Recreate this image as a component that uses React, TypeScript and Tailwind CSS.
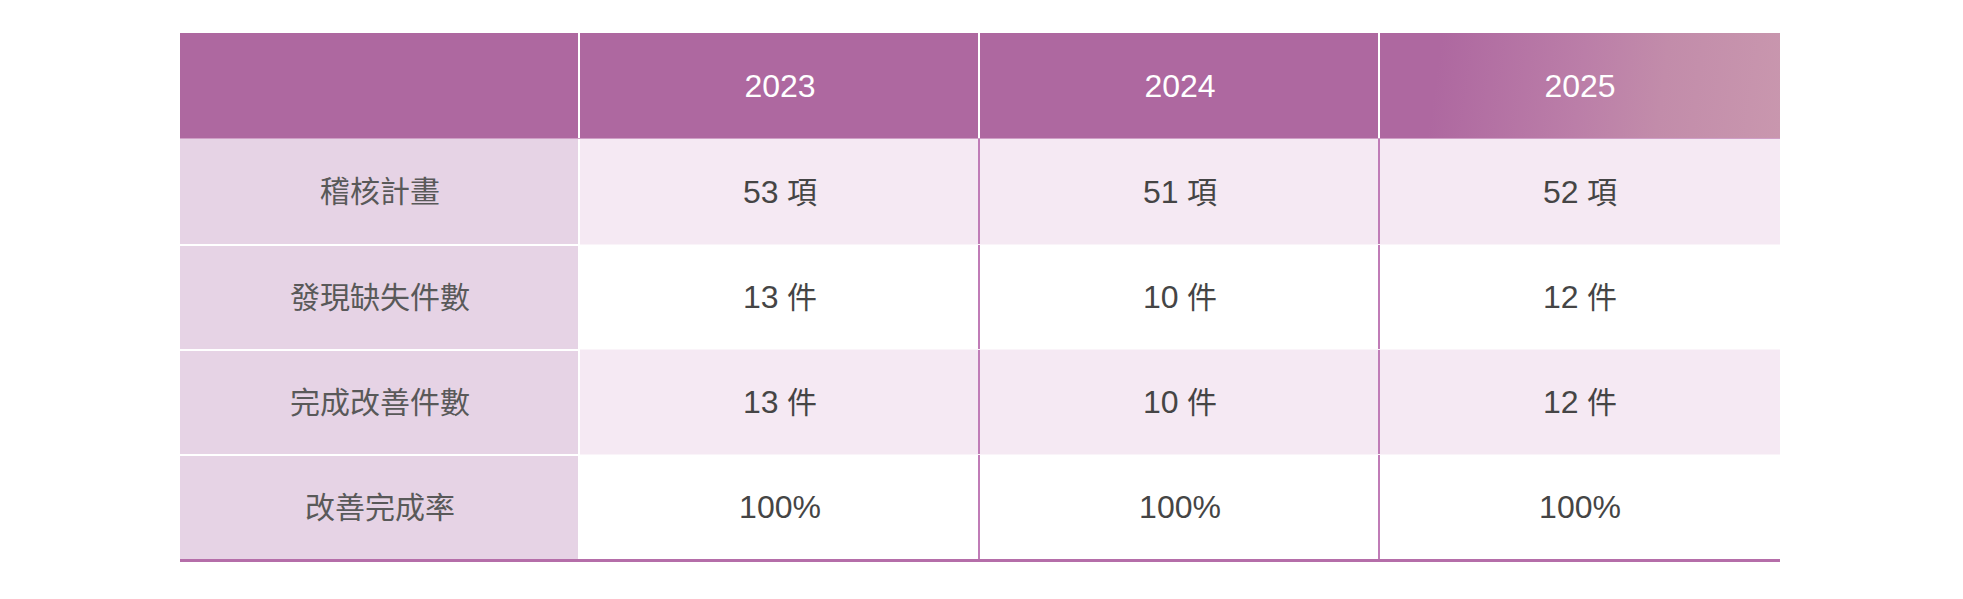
const years = ['2023', '2024', '2025']

const rows = [
  { label: '稽核計畫', values: ['53 項', '51 項', '52 項'] },
  { label: '發現缺失件數', values: ['13 件', '10 件', '12 件'] },
  { label: '完成改善件數', values: ['13 件', '10 件', '12 件'] },
  { label: '改善完成率', values: ['100%', '100%', '100%'] },
]

const font = "font-['Liberation_Sans','Noto_Sans_CJK_TC',sans-serif]"

// number part a touch larger than the CJK unit, as in the source
function Value({ text }: { text: string }) {
  const [num, unit] = text.split(' ')
  return (
    <span className="whitespace-pre">
      <span className="text-[32px]">{num}</span>
      {unit && <span className="text-[30px]">{' ' + unit}</span>}
    </span>
  )
}

export default function App() {
  return (
    <div className={`min-h-screen bg-white pt-[33px] ${font}`}>
      <div className="ml-[180px] w-[1600px] border-b-[3px] border-[#b56ea9]">
        {/* header */}
        <div className="grid h-[106px] grid-cols-4 border-b border-[#cf9fc6] bg-[#ae68a0] text-[32px] text-white">
          <div />
          {years.map((y, i) => (
            <div
              key={y}
              className={`-ml-[2px] flex items-center justify-center border-l-2 border-white ${
                i === 2
                  ? 'bg-[linear-gradient(98deg,#ae68a0_0%,#ae68a0_15%,#bb7ea8_50%,#c28caa_70%,#c997ae_100%)]'
                  : ''
              }`}
            >
              {y}
            </div>
          ))}
        </div>

        {/* body */}
        {rows.map((row, r) => (
          <div
            key={row.label}
            className={`grid h-[105px] grid-cols-4 ${
              r % 2 === 0 ? 'bg-[#f5e9f3]' : 'bg-white'
            } ${r > 0 ? 'border-t border-[#faf4f9]' : ''}`}
          >
            <div
              className={`flex items-center justify-center bg-[#e6d3e5] text-[30px] text-[#595959] ${
                r > 0 ? '-mt-px border-t-2 border-white' : ''
              }`}
            >
              {row.label}
            </div>
            {row.values.map((v, i) => (
              <div
                key={i}
                className={`-ml-[2px] flex items-center justify-center text-[#454545] ${
                  i === 0 ? 'border-l-2 border-white' : 'border-l-2 border-[#c07cb7]'
                }`}
              >
                <Value text={v} />
              </div>
            ))}
          </div>
        ))}
      </div>
    </div>
  )
}
